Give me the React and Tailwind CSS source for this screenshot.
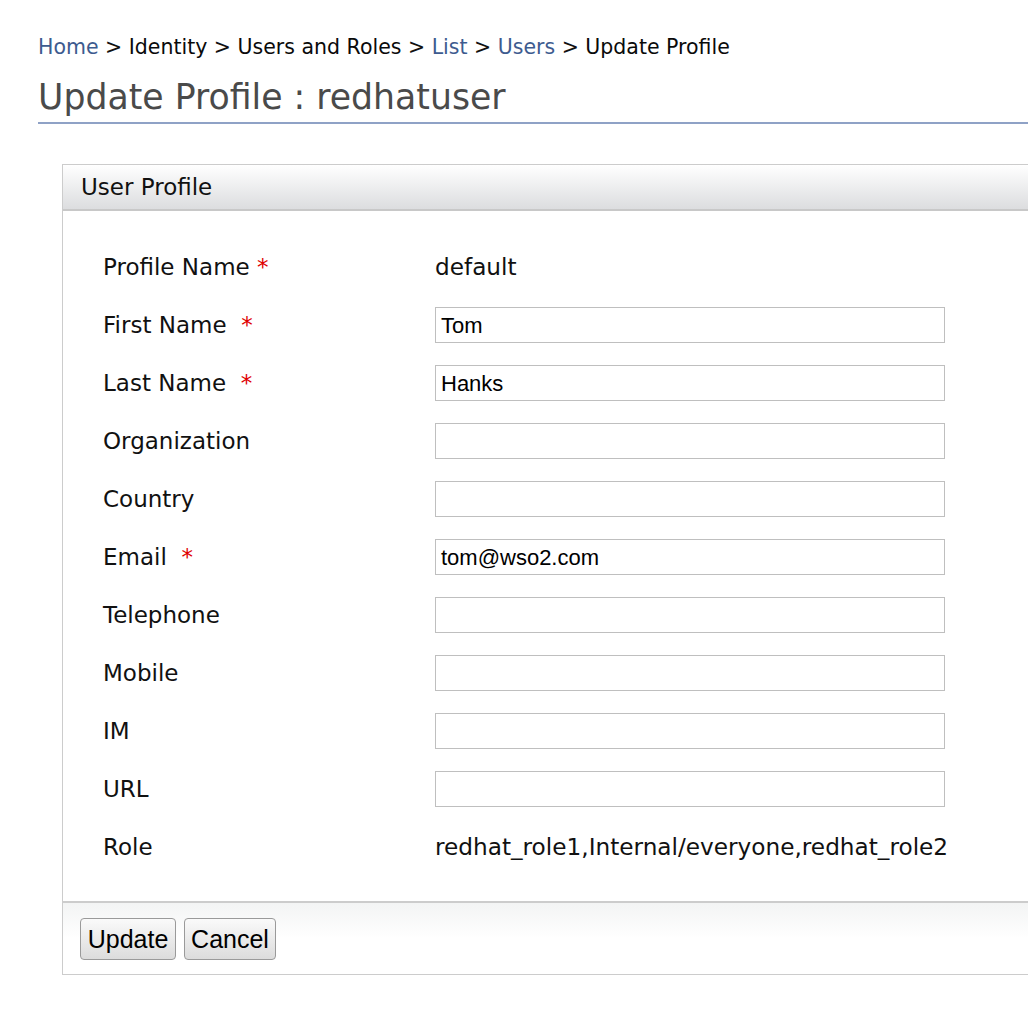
import React from "react";

const fields = [
  { label: "Profile Name", req: " ", value: "default", type: "text" },
  { label: "First Name", req: "\u00a0 ", value: "Tom", type: "input" },
  { label: "Last Name", req: "\u00a0 ", value: "Hanks", type: "input" },
  { label: "Organization", value: "", type: "input" },
  { label: "Country", value: "", type: "input" },
  { label: "Email", req: "\u00a0 ", value: "tom@wso2.com", type: "input" },
  { label: "Telephone", value: "", type: "input" },
  { label: "Mobile", value: "", type: "input" },
  { label: "IM", value: "", type: "input" },
  { label: "URL", value: "", type: "input" },
  { label: "Role", value: "redhat_role1,Internal/everyone,redhat_role2", type: "text" },
];

const crumbs = [
  { text: "Home", link: true },
  { text: "Identity" },
  { text: "Users and Roles" },
  { text: "List", link: true },
  { text: "Users", link: true },
  { text: "Update Profile" },
];

export default function App() {
  return (
    <div className="w-[1028px] h-[1020px] overflow-hidden bg-white font-['DejaVu_Sans',sans-serif] text-[#111]">
      <div className="pl-[38px] pt-[35px]">
        {/* breadcrumb */}
        <div className="text-[20.5px] leading-[24px] whitespace-nowrap">
          {crumbs.map((c, i) => (
            <span key={c.text}>
              {i > 0 && <span> &gt; </span>}
              <span className={c.link ? "text-[#3d5b8f]" : "text-[#0a0a0a]"}>{c.text}</span>
            </span>
          ))}
        </div>
        <h1 className="mt-[17px] pb-[4px] border-b-2 border-[#8fa2c6] text-[34.7px] leading-[42px] text-[#4a4a4a] whitespace-nowrap">
          Update Profile : redhatuser
        </h1>

        {/* panel */}
        <div className="ml-[24px] mt-[40px] w-[1000px] border border-[#cccccc]">
          <div className="h-[46px] flex items-center pl-[18px] text-[23px] border-b-2 border-[#c8c8c8] bg-gradient-to-b from-[#ffffff] to-[#dcdddf]">
            User Profile
          </div>
          <div className="pt-[27px] pb-[25px] pl-[40px]">
            {fields.map((f) => (
              <div key={f.label} className="h-[58px] flex items-center text-[23px]">
                <div className="w-[332px] whitespace-nowrap">
                  {f.label}
                  {f.req && (
                    <>
                      {f.req}
                      <span className="text-[#e00000]">*</span>
                    </>
                  )}
                </div>
                {f.type === "input" ? (
                  <div className="w-[510px] h-[36px] border border-[#bfbfbf] flex items-center pl-[5px] font-['Liberation_Sans',Arial,sans-serif] text-[22px] text-black">
                    {f.value}
                  </div>
                ) : (
                  <div className="whitespace-nowrap text-[23.2px]">{f.value}</div>
                )}
              </div>
            ))}
          </div>
          <div className="h-[73px] border-t-2 border-[#cccccc] bg-gradient-to-b from-[#f3f4f4] via-[#ffffff] to-[#ffffff] flex items-center gap-[8px] pl-[17px] pt-[1px] font-['Liberation_Sans',Arial,sans-serif] text-[25px] text-black">
            <button className="w-[96px] h-[42px] rounded-[4px] border border-[#9a9a9a] bg-gradient-to-b from-[#fafafa] to-[#dcdcdc] leading-none">
              Update
            </button>
            <button className="w-[92px] h-[42px] rounded-[4px] border border-[#9a9a9a] bg-gradient-to-b from-[#fafafa] to-[#dcdcdc] leading-none">
              Cancel
            </button>
          </div>
        </div>
      </div>
    </div>
  );
}
